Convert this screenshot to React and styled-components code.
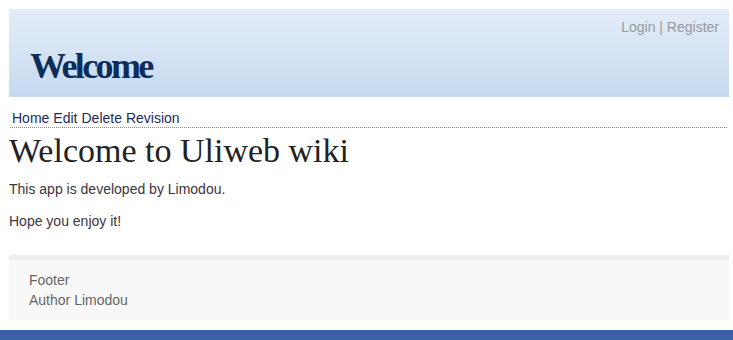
import React from "react";
import styled, { createGlobalStyle } from "styled-components";

const Global = createGlobalStyle`
  html, body { margin: 0; padding: 0; background: #fff; }
  body { font-family: "Liberation Sans", Arial, sans-serif; font-size: 14px; color: #333; }
`;

const Page = styled.div`
  padding: 9px 4px 0 9px;
`;

const Header = styled.header`
  height: 88px;
  box-sizing: border-box;
  background: linear-gradient(to bottom, #e4edf8 0%, #c5d9f0 100%);
  display: flex;
  flex-direction: column;
`;

const TopLinks = styled.div`
  text-align: right;
  padding: 10px 10px 0;
  line-height: 16px;
  color: #999;
  font-size: 14px;
`;

const Link = styled.a`
  color: ${(p) => p.$color || "inherit"};
  text-decoration: none;
  cursor: pointer;
`;

const Logo = styled.h1`
  margin: 11px 0 0 21px;
  font-family: "Liberation Serif", "Times New Roman", serif;
  font-weight: bold;
  font-size: 36px;
  letter-spacing: -2.6px;
  line-height: 41px;
  color: #0c2d5c;
`;

const Nav = styled.nav`
  margin: 13px 2px 0 1px;
  padding-left: 2px;
  line-height: 17px;
  border-bottom: 1px dotted #888;
  display: flex;
  gap: 4px;
`;

const Title = styled.h1`
  margin: 3px 0 9px;
  font-family: "Liberation Serif", "Times New Roman", serif;
  font-weight: normal;
  font-size: 34px;
  line-height: 39px;
  color: #222;
`;

const Para = styled.p`
  margin: 0 0 12px;
  line-height: 20px;
  color: #3a3540;
`;

const Content = styled.main`
  padding-bottom: 12px;
`;

const Footer = styled.footer`
  border-top: 5px solid #eeeeee;
  background: #f8f8f8;
  padding: 10px 20px;
  line-height: 20px;
  color: #666;
`;

const BottomBar = styled.div`
  margin-top: 10px;
  height: 10px;
  background: #3862a5;
`;

export default function App() {
  return (
    <>
      <Global />
      <Page>
        <Header>
          <TopLinks>
            <Link>Login</Link> | <Link>Register</Link>
          </TopLinks>
          <Logo>Welcome</Logo>
        </Header>
        <Nav>
          {["Home", "Edit", "Delete", "Revision"].map((n) => (
            <Link key={n} $color="#1f2b5b">{n}</Link>
          ))}
        </Nav>
        <Content>
          <Title>Welcome to Uliweb wiki</Title>
          <Para>This app is developed by Limodou.</Para>
          <Para>Hope you enjoy it!</Para>
        </Content>
        <Footer>
          <div>Footer</div>
          <div>Author Limodou</div>
        </Footer>
      </Page>
      <BottomBar />
    </>
  );
}
